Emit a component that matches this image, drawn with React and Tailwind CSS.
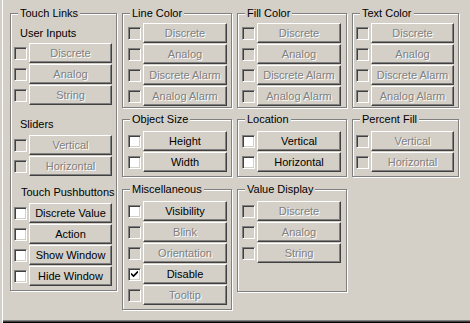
import React from "react";

const Check = ({ enabled, checked }) => (
  <div
    className={`w-[13px] h-[13px] shrink-0 border border-t-[#808080] border-l-[#808080] border-b-white border-r-white shadow-[inset_1px_1px_#404040,inset_-1px_-1px_#d4d0c8] flex items-center justify-center ${
      enabled ? "bg-white" : "bg-[#d4d0c8]"
    }`}
  >
    {checked && (
      <svg width="7" height="7" viewBox="0 0 7 7">
        <path d="M0 2.5 L2.5 5 L7 0.5" stroke="#000" strokeWidth="1.6" fill="none" />
      </svg>
    )}
  </div>
);

const Btn = ({ label, enabled, w }) => (
  <div
    className={`h-[20px] ${w} flex items-center justify-center border border-t-white border-l-white border-b-[#404040] border-r-[#404040] shadow-[inset_-1px_-1px_#808080] ${
      enabled ? "text-black" : "text-[#808080] [text-shadow:1px_1px_#fff]"
    }`}
  >
    {label}
  </div>
);

const Row = ({ label, enabled, checked, w = "w-[83px]" }) => (
  <div className="flex items-center gap-[2px] h-[20px]">
    <Check enabled={enabled} checked={checked} />
    <Btn label={label} enabled={enabled} w={w} />
  </div>
);

// etched group box: gray line with a white line one pixel in/out
const Group = ({ title, className, children }) => (
  <div
    className={`relative border border-[#808080] shadow-[inset_1px_1px_#fff,1px_1px_#fff] ${className}`}
  >
    <span className="absolute -top-[8px] left-[7px] px-[2px] bg-[#d4d0c8] leading-[14px] text-black">
      {title}
    </span>
    {children}
  </div>
);

const SubLabel = ({ children, className }) => (
  <div className={`h-[14px] leading-[14px] pl-[6px] text-black ${className}`}>{children}</div>
);

export default function App() {
  return (
    <div className="w-[470px] h-[323px] bg-[#d4d0c8] font-['Liberation_Sans',Arial,sans-serif] text-[11px] select-none shadow-[inset_2px_0_#d4d0c8,inset_3px_0_#fff,inset_0_-1px_#000,inset_0_-2px_#404040,inset_0_-3px_#808080]">
      <div className="flex gap-[5px] pl-[10px] pt-[13px]">
        {/* column 1 */}
        <Group title="Touch Links" className="w-[107px] h-[278px] pl-[3px] pt-[12px]">
          <SubLabel>User Inputs</SubLabel>
          <div className="flex flex-col gap-[1px] mt-[3px]">
            <Row label="Discrete" />
            <Row label="Analog" />
            <Row label="String" />
          </div>
          <SubLabel className="mt-[12px] pl-[5px]">Sliders</SubLabel>
          <div className="flex flex-col gap-[1px] mt-[4px]">
            <Row label="Vertical" />
            <Row label="Horizontal" />
          </div>
          <SubLabel className="mt-[9px] pl-[7px]">Touch Pushbuttons</SubLabel>
          <div className="flex flex-col gap-[1px] mt-[4px]">
            <Row label="Discrete Value" enabled />
            <Row label="Action" enabled />
            <Row label="Show Window" enabled />
            <Row label="Hide Window" enabled />
          </div>
        </Group>

        {/* column 2 */}
        <div className="flex flex-col">
          <Group title="Line Color" className="w-[110px] h-[95px] pl-[5px] pt-[9px]">
            <div className="flex flex-col gap-[1px]">
              <Row label="Discrete" w="w-[84px]" />
              <Row label="Analog" w="w-[84px]" />
              <Row label="Discrete Alarm" w="w-[84px]" />
              <Row label="Analog Alarm" w="w-[84px]" />
            </div>
          </Group>
          <Group title="Object Size" className="w-[110px] h-[58px] mt-[11px] pl-[5px] pt-[11px]">
            <div className="flex flex-col gap-[1px]">
              <Row label="Height" enabled w="w-[84px]" />
              <Row label="Width" enabled w="w-[84px]" />
            </div>
          </Group>
          <Group title="Miscellaneous" className="w-[110px] h-[121px] mt-[12px] pl-[5px] pt-[11px]">
            <div className="flex flex-col gap-[1px]">
              <Row label="Visibility" enabled w="w-[84px]" />
              <Row label="Blink" w="w-[84px]" />
              <Row label="Orientation" w="w-[84px]" />
              <Row label="Disable" enabled checked w="w-[84px]" />
              <Row label="Tooltip" w="w-[84px]" />
            </div>
          </Group>
        </div>

        {/* column 3 */}
        <div className="flex flex-col">
          <Group title="Fill Color" className="w-[110px] h-[95px] pl-[4px] pt-[9px]">
            <div className="flex flex-col gap-[1px]">
              <Row label="Discrete" w="w-[84px]" />
              <Row label="Analog" w="w-[84px]" />
              <Row label="Discrete Alarm" w="w-[84px]" />
              <Row label="Analog Alarm" w="w-[84px]" />
            </div>
          </Group>
          <Group title="Location" className="w-[110px] h-[58px] mt-[11px] pl-[4px] pt-[11px]">
            <div className="flex flex-col gap-[1px]">
              <Row label="Vertical" enabled w="w-[84px]" />
              <Row label="Horizontal" enabled w="w-[84px]" />
            </div>
          </Group>
          <Group title="Value Display" className="w-[110px] h-[103px] mt-[12px] pl-[4px] pt-[11px]">
            <div className="flex flex-col gap-[1px]">
              <Row label="Discrete" w="w-[84px]" />
              <Row label="Analog" w="w-[84px]" />
              <Row label="String" w="w-[84px]" />
            </div>
          </Group>
        </div>

        {/* column 4 */}
        <div className="flex flex-col">
          <Group title="Text Color" className="w-[107px] h-[95px] pl-[3px] pt-[9px]">
            <div className="flex flex-col gap-[1px]">
              <Row label="Discrete" />
              <Row label="Analog" />
              <Row label="Discrete Alarm" />
              <Row label="Analog Alarm" />
            </div>
          </Group>
          <Group title="Percent Fill" className="w-[107px] h-[58px] mt-[11px] pl-[3px] pt-[11px]">
            <div className="flex flex-col gap-[1px]">
              <Row label="Vertical" />
              <Row label="Horizontal" />
            </div>
          </Group>
        </div>
      </div>
    </div>
  );
}
